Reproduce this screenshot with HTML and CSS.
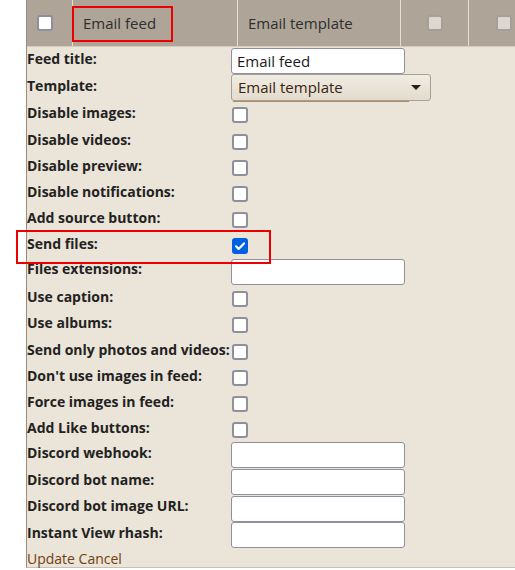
FILE: index.html
```html
<!DOCTYPE html>
<html>
<head>
<meta charset="utf-8">
<link rel="stylesheet" href="styles.css">
</head>
<body>
<div class="page">
  <div class="panel">
    <div class="head">
      <div class="hcell hcheck"><span class="cb"></span></div>
      <div class="hcell hfeed">Email feed</div>
      <div class="hcell htpl">Email template</div>
      <div class="hcell hsmall"><span class="cb cb-dis"></span></div>
      <div class="hcell hlast"><span class="cb cb-dis"></span></div>
    </div>
    <div class="form">
      <div class="row row-in"><div class="lbl">Feed title:</div><div class="ctl"><div class="inp">Email feed</div></div></div>
      <div class="row row-sel"><div class="lbl">Template:</div><div class="ctl"><div class="sel"><span>Email template</span><span class="arrow"></span></div></div></div>
      <div class="row row-cb"><div class="lbl">Disable images:</div><div class="ctl"><span class="cb"></span></div></div>
      <div class="row row-cb"><div class="lbl">Disable videos:</div><div class="ctl"><span class="cb"></span></div></div>
      <div class="row row-cb"><div class="lbl">Disable preview:</div><div class="ctl"><span class="cb"></span></div></div>
      <div class="row row-cb"><div class="lbl">Disable notifications:</div><div class="ctl"><span class="cb"></span></div></div>
      <div class="row row-cb"><div class="lbl">Add source button:</div><div class="ctl"><span class="cb"></span></div></div>
      <div class="row row-cb"><div class="lbl">Send files:</div><div class="ctl"><span class="cb cb-on"><svg viewBox="0 0 16 16" width="16" height="16"><path d="M4 8.3l2.6 2.6L12 5.4" fill="none" stroke="#fff" stroke-width="2.2" stroke-linecap="round" stroke-linejoin="round"/></svg></span></div></div>
      <div class="row row-in"><div class="lbl">Files extensions:</div><div class="ctl"><div class="inp"></div></div></div>
      <div class="row row-cb"><div class="lbl">Use caption:</div><div class="ctl"><span class="cb"></span></div></div>
      <div class="row row-cb"><div class="lbl">Use albums:</div><div class="ctl"><span class="cb"></span></div></div>
      <div class="row row-cb"><div class="lbl">Send only photos and videos:</div><div class="ctl"><span class="cb"></span></div></div>
      <div class="row row-cb"><div class="lbl">Don't use images in feed:</div><div class="ctl"><span class="cb"></span></div></div>
      <div class="row row-cb"><div class="lbl">Force images in feed:</div><div class="ctl"><span class="cb"></span></div></div>
      <div class="row row-cb"><div class="lbl">Add Like buttons:</div><div class="ctl"><span class="cb"></span></div></div>
      <div class="row row-in"><div class="lbl">Discord webhook:</div><div class="ctl"><div class="inp"></div></div></div>
      <div class="row row-in"><div class="lbl">Discord bot name:</div><div class="ctl"><div class="inp"></div></div></div>
      <div class="row row-in"><div class="lbl">Discord bot image URL:</div><div class="ctl"><div class="inp"></div></div></div>
      <div class="row row-in"><div class="lbl">Instant View rhash:</div><div class="ctl"><div class="inp"></div></div></div>
      <div class="actions">Update Cancel</div>
    </div>
  </div>
  <div class="mark mark-head"></div>
  <div class="mark mark-files"></div>
</div>
</body>
</html>
```

FILE: styles.css
```css
html, body {
  margin: 0;
  padding: 0;
  background: #ffffff;
}
body {
  font-family: "Open Sans", "Noto Sans", sans-serif;
  width: 515px;
  height: 570px;
  overflow: hidden;
}
.page {
  position: relative;
  padding-left: 26px;
}
.panel {
  border-left: 1px solid #978c7e;
  border-bottom: 1px solid #c9c1b2;
  background: #ebe4d8;
  height: 568px;
  box-sizing: border-box;
}
.head {
  display: flex;
  height: 46px;
  background: #aea598;
  border-bottom: 1px solid #d6cebf;
}
.hcell {
  display: flex;
  align-items: center;
  font-size: 15px;
  color: #2e2e2e;
  border-right: 1px solid #e6dfd1;
  box-sizing: border-box;
}
.hcheck { width: 46px; padding-left: 10px; }
.hfeed { width: 165px; padding-left: 10px; }
.htpl { width: 163px; padding-left: 10px; }
.hsmall { width: 68px; justify-content: center; }
.hlast { flex: 1; border-right: none; padding-left: 27px; }

.cb {
  display: inline-block;
  width: 16px;
  height: 16px;
  box-sizing: border-box;
  border: 2px solid #8f8f9d;
  border-radius: 3px;
  background: #ffffff;
}
.cb-dis {
  background: #dcd8d1;
  border-color: #a59f97;
}
.cb-on {
  background: #0060df;
  border-color: #0060df;
  position: relative;
}
.cb-on svg {
  position: absolute;
  left: -2px;
  top: -2px;
}

.row {
  display: flex;
  align-items: flex-start;
}
.lbl {
  width: 204px;
  white-space: nowrap;
  font-weight: bold;
  font-size: 14px;
  line-height: 18px;
  color: #222222;
}
.ctl {
  position: relative;
}
.row-in { height: 26.7px; }
.row-in .lbl { padding-top: 2.5px; }
.row-in .inp { margin-top: 1px; }
.row-sel { height: 26.7px; }
.row-sel .lbl { padding-top: 3.5px; }
.row-cb { height: 26.2px; }
.row-cb .lbl { padding-top: 4px; }
.row-cb .cb { margin-top: 7px; margin-left: 1px; }

.inp {
  width: 174px;
  height: 26px;
  box-sizing: border-box;
  background: #ffffff;
  border: 1px solid #8f8f9d;
  border-radius: 3px;
  font-size: 15px;
  line-height: 24px;
  padding-left: 5px;
  color: #1b1b1b;
}
.sel {
  width: 200px;
  height: 27px;
  box-sizing: border-box;
  border: 1px solid #a7a093;
  border-radius: 3px;
  background: linear-gradient(#f1ece3, #e2dbcd);
  font-size: 15px;
  line-height: 25px;
  padding-left: 6px;
  padding-top: 1px;
  color: #3a2410;
  display: flex;
  justify-content: space-between;
  align-items: center;
}
.sel .arrow {
  width: 0;
  height: 0;
  border-left: 5px solid transparent;
  border-right: 5px solid transparent;
  border-top: 5px solid #222222;
  margin-right: 9px;
}
.row-sel .ctl::after {
  content: "";
  position: absolute;
  left: 2px;
  bottom: -1px;
  width: 176px;
  height: 1px;
  background: #b38d62;
}
.actions {
  font-size: 14px;
  color: #6f3f12;
  padding-top: 1px;
  line-height: 20px;
}

.mark {
  position: absolute;
  border: 2px solid #ee0000;
  box-sizing: border-box;
}
.mark-head {
  left: 72px;
  top: 6px;
  width: 101px;
  height: 36px;
}
.mark-files {
  left: 16px;
  top: 230px;
  width: 255px;
  height: 34px;
}
```
